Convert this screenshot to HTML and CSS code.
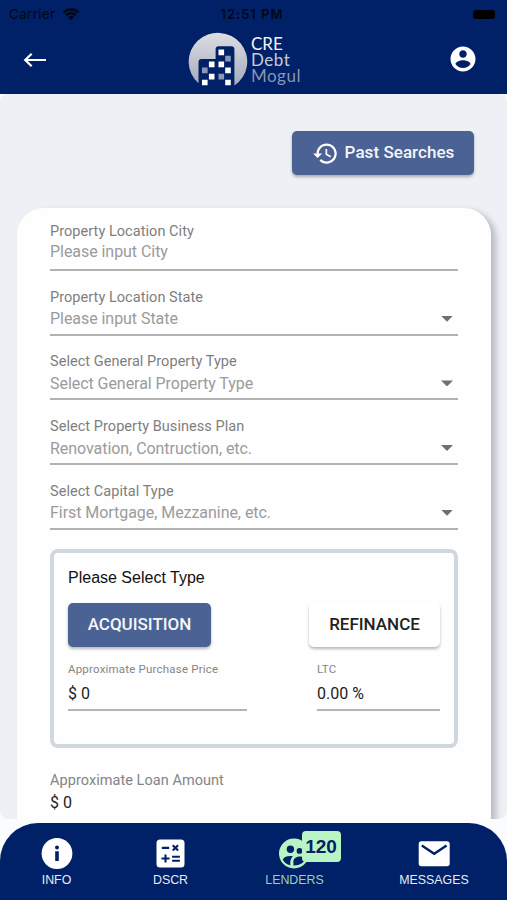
FILE: index.html
```html
<!DOCTYPE html>
<html lang="en">
<head>
<meta charset="utf-8">
<title>CRE Debt Mogul</title>
<link rel="stylesheet" href="styles.css">
</head>
<body>
<div class="app">
  <header class="header">
    <div class="status">
      <div class="carrier"><span>Carrier</span>
        <svg width="18" height="14" viewBox="0 0 18 14"><path d="M0.6 4.6a12 12 0 0 1 16.8 0l-1.7 1.8a9.6 9.6 0 0 0-13.4 0zM3.3 7.4a8.1 8.1 0 0 1 11.4 0l-1.8 1.8a5.6 5.6 0 0 0-7.8 0zM6 10.2a4.3 4.3 0 0 1 6 0L9 13.3z" fill="#000818"/></svg>
      </div>
      <div class="clock">12:51 PM</div>
      <div class="battery"></div>
    </div>
    <div class="bar">
      <svg class="back" width="24" height="18" viewBox="0 0 24 18"><path d="M23 9H2.500M8.700 2.700L2.200 9l6.500 6.300" fill="none" stroke="#fff" stroke-width="2.200"/></svg>
      <div class="brand">
        <svg width="60" height="56" viewBox="0 0 60 56">
          <defs><linearGradient id="disc" x1="0" y1="0" x2="0" y2="1"><stop offset="0" stop-color="#dddee2"/><stop offset="1" stop-color="#a5abbc"/></linearGradient></defs>
          <path d="M10.500 51.200A29.300 28.800 0 1 1 46.400 53.500V17.200q0-3-3-3H30.600q-3 0-3 3v9.900H13.500q-3 0-3 3z" fill="url(#disc)"/>
          <g fill="#fff"><path d="M30.500 17.600h5.600v5.600h-5.600zM20.900 29.600h5.600v5.600h-5.600zM30.500 29.600h5.600v5.600h-5.600zM37.200 35.600h5.600v5.600h-5.600zM20.900 41.800h5.600v5.600h-5.600zM14 47.700h5.600v5.600h-5.600zM37.200 47.700h5.600v5.600h-5.600z"/></g>
          <g fill="#8b96b8"><path d="M37.200 23.800h5.600v5.600h-5.600zM14 35.600h5.600v5.600h-5.600zM30.500 41.800h5.600v5.600h-5.600z"/></g>
        </svg>
        <div class="brand-name"><span class="n1">CRE</span><span class="n2">Debt</span><span class="n3">Mogul</span></div>
      </div>
      <svg class="account" width="30" height="30" viewBox="0 0 24 24"><path fill="#fff" d="M12 2C6.480 2 2 6.480 2 12s4.480 10 10 10 10-4.480 10-10S17.520 2 12 2zm0 3c1.660 0 3 1.340 3 3s-1.340 3-3 3-3-1.340-3-3 1.340-3 3-3zm0 14.200c-2.500 0-4.710-1.280-6-3.220.03-1.990 4-3.080 6-3.080 1.990 0 5.970 1.090 6 3.080-1.290 1.940-3.500 3.220-6 3.220z"/></svg>
    </div>
  </header>

  <main class="content">
    <div class="actions">
      <button class="btn past">
        <svg width="27" height="27" viewBox="0 0 24 24"><path fill="#fff" d="M13 3c-4.970 0-9 4.030-9 9H1l3.890 3.890.07.14L9 12H6c0-3.870 3.130-7 7-7s7 3.130 7 7-3.130 7-7 7c-1.930 0-3.680-.79-4.940-2.060l-1.420 1.420C8.270 19.990 10.510 21 13 21c4.970 0 9-4.030 9-9s-4.030-9-9-9zm-1 5v5l4.280 2.540.72-1.210-3.500-2.080V8H12z"/></svg>
        <span>Past Searches</span>
      </button>
    </div>
    <section class="card">
      <div class="field city"><label>Property Location City</label><div class="value">Please input City</div></div>
      <div class="field"><label>Property Location State</label><div class="value">Please input State<i class="caret"></i></div></div>
      <div class="field"><label>Select General Property Type</label><div class="value">Select General Property Type<i class="caret"></i></div></div>
      <div class="field"><label>Select Property Business Plan</label><div class="value">Renovation, Contruction, etc.<i class="caret"></i></div></div>
      <div class="field"><label>Select Capital Type</label><div class="value">First Mortgage, Mezzanine, etc.<i class="caret"></i></div></div>
      <div class="group">
        <div class="group-title">Please Select Type</div>
        <div class="row">
          <button class="btn acq"><span>ACQUISITION</span></button>
          <button class="btn refi"><span>REFINANCE</span></button>
        </div>
        <div class="row inputs">
          <div class="mini price"><label><span>Approximate Purchase Price</span></label><div>$ 0</div></div>
          <div class="mini ltc"><label><span>LTC</span></label><div>0.00 %</div></div>
        </div>
      </div>
      <div class="loan"><label>Approximate Loan Amount</label><div>$ 0</div></div>
    </section>
  </main>

  <nav class="nav">
    <div class="tab info">
      <svg width="32" height="32" viewBox="0 0 32 32"><circle cx="16" cy="15.500" r="15.400" fill="#fff"/><circle cx="16" cy="9.500" r="2" fill="#002067"/><path d="M14.200 13.300h3.600v9.700h-3.600z" fill="#002067"/></svg>
      <span>INFO</span>
    </div>
    <div class="tab dscr">
      <svg width="32" height="32" viewBox="0 0 32 32"><rect x="1.500" y="1.500" width="28" height="28" rx="3.500" fill="#fff"/><path d="M6.800 9.900h7.400M17.700 7.200l5.400 5.400M23.100 7.200l-5.400 5.400M6.500 20.500h8M10.500 16.500v8M17.100 18.800h7.800M17.100 22.700h7.800" stroke="#002067" stroke-width="2.100" fill="none"/></svg>
      <span>DSCR</span>
    </div>
    <div class="tab lenders">
      <div class="icon-wrap">
        <svg width="32" height="32" viewBox="0 0 32 32"><circle cx="15" cy="15.500" r="15" fill="#b9f4c4"/><g fill="#002067"><circle cx="11.400" cy="11.300" r="3.700"/><circle cx="20.500" cy="12.900" r="2.900"/><path d="M3.700 21.500c1.600-2.900 6-4 10.200-3.100-2.600 2.100-2.600 4.700-2.600 8.800-3.500-.8-6.200-2.700-7.600-5.700zM14.400 27.500v-4.300c0-3.200 4.200-5 7.200-4.700 2.200.2 4.300 1 5.300 2.100-2 4.300-6 7.100-12.500 6.900z"/></g></svg>
        <b class="badge">120</b>
      </div>
      <span>LENDERS</span>
    </div>
    <div class="tab messages">
      <svg width="32" height="32" viewBox="0 0 32 32"><rect x=".7" y="3.300" width="31" height="25" rx="2.800" fill="#fff"/><path d="M3.800 7.500l12.400 8.200 12.400-8.200" fill="none" stroke="#002067" stroke-width="2.400"/></svg>
      <span>MESSAGES</span>
    </div>
  </nav>
</div>
</body>
</html>
```

FILE: styles.css
```css
* { box-sizing: border-box; }
body { margin: 0; background: #fbfcfe; font-family: Roboto, "Liberation Sans", sans-serif; }
svg { display: block; flex: none; }
button { border: 0; padding: 0; font: inherit; }
.app { width: 507px; height: 900px; display: flex; flex-direction: column; overflow: hidden; }

.header { height: 94px; background: #002067; flex: none; }
.status { height: 28px; display: grid; grid-template-columns: 1fr auto 1fr; align-items: center; padding: 0 12px 0 9px; color: #000818; font: 13.5px Inter, sans-serif; }
.carrier { display: flex; gap: 7px; align-items: center; letter-spacing: .3px; }
.clock { font-weight: 600; font-size: 13px; letter-spacing: 1px; }
.battery { width: 22px; height: 9px; border-radius: 3px; background: #000; justify-self: end; }
.bar { height: 66px; display: flex; align-items: flex-start; padding: 0 29px 0 23px; }
.back { margin-top: 23px; }
.brand { display: flex; margin: 4px 0 0 141px; }
.brand-name { display: flex; flex-direction: column; margin: 4px 0 0 3px; font: 17px/16px Lato, sans-serif; letter-spacing: .5px; width: 60px; }
.n1 { color: #f3f4f8; letter-spacing: 0; }
.n2 { color: #c5cbd9; }
.n3 { color: #8995b5; }
.account { margin: 16px 0 0 auto; }

.content { height: 725px; flex: none; overflow: hidden; background: #edf1f6; border-radius: 8px; padding: 37px 16px 0 17px; }
.actions { display: flex; justify-content: flex-end; padding-right: 17px; }
.btn { height: 44px; border-radius: 5px; display: flex; align-items: center; justify-content: center; font-weight: 500; white-space: nowrap; box-shadow: 0 2px 3px rgba(0,0,0,.28); }
.btn span { margin-top: -2px; }
.past { width: 182px; background: #4b6294; color: #f4f6fa; gap: 6px; font-size: 17px; letter-spacing: .05px; }
.card { height: 640px; margin-top: 33px; background: #fefefe; border-radius: 27px; padding: 13px 33px 0; box-shadow: 5px 3px 6px rgba(0,0,0,.22); }
.field { height: 49px; margin-bottom: 15.7px; padding-top: 1px; border-bottom: 2px solid #b2b2b2; }
.field label { display: block; font-size: 14.5px; line-height: 19px; color: #7e7e7e; letter-spacing: .05px; }
.value { display: flex; justify-content: space-between; align-items: center; height: 20px; margin-top: 2px; font-size: 16px; color: #9b9b9b; letter-spacing: -.05px; white-space: nowrap; }
.city { height: 50px; }
.city .value { margin-top: 0; }
.caret { width: 12px; height: 6px; margin-right: 5px; background: #707070; clip-path: polygon(0 0, 100% 0, 50% 100%); }
.group { height: 199px; margin-top: 19px; border: 4px solid #cfd8dc; border-radius: 8px; padding: 15px 14px 0; }
.group-title { font: 16px/20px "Liberation Sans", sans-serif; color: #111; }
.row { display: flex; justify-content: space-between; }
.row .btn { margin-top: 15px; font-size: 17px; }
.acq { width: 143px; background: #4b6294; color: #f4f6fa; }
.refi { width: 131px; background: #fff; color: #222; }
.inputs { padding-top: 14px; }
.mini { height: 50px; border-bottom: 2px solid #b5b5b5; color: #1c1c1c; font-size: 16px; }
.mini label { display: block; font-size: 11.5px; line-height: 16px; color: #858585; letter-spacing: .2px; white-space: nowrap; }
.mini div { line-height: 20px; margin-top: 7px; }
.price { width: 179px; }
.ltc { width: 123px; }
.loan { margin-top: 22px; font-size: 16px; color: #1c1c1c; }
.loan label { display: block; font-size: 14.5px; line-height: 21px; color: #858585; letter-spacing: .05px; }
.loan div { line-height: 20px; margin-top: 2px; }

.nav { height: 77px; margin-top: 4px; flex: none; background: #002067; border-radius: 38px 38px 0 0; display: grid; grid-template-columns: 113px 115px 133px 146px; padding-top: 15px; font: 12.400px "Liberation Sans", sans-serif; color: #e8ebf3; }
.tab { display: flex; flex-direction: column; align-items: center; gap: 2px; line-height: 16px; }
.lenders { color: #9bd3b4; }
.icon-wrap { position: relative; }
.badge { position: absolute; left: 23px; top: -7px; width: 39px; height: 31px; border-radius: 4px; background: #b9f4c4; color: #002067; font-size: 19px; line-height: 32px; text-align: center; }
```
